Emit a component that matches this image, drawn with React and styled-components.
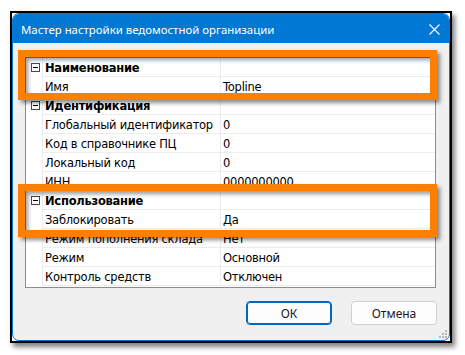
import React from "react";
import styled, { createGlobalStyle } from "styled-components";

const GlobalStyle = createGlobalStyle`
  * { box-sizing: border-box; }
  body {
    margin: 0;
    background: #ffffff;
  }
`;

const groups = [
  {
    title: "Наименование",
    rows: [["Имя", "Topline"]],
  },
  {
    title: "Идентификация",
    rows: [
      ["Глобальный идентификатор", "0"],
      ["Код в справочнике ПЦ", "0"],
      ["Локальный код", "0"],
      ["ИНН", "0000000000"],
    ],
  },
  {
    title: "Использование",
    rows: [
      ["Заблокировать", "Да"],
      ["Режим пополнения склада", "Нет"],
      ["Режим", "Основной"],
      ["Контроль средств", "Отключен"],
    ],
  },
];

const App = () => {
  return (
    <Stage>
      <GlobalStyle />
      <Frame>
        <Window>
          <TitleBar>
            <Title>Мастер настройки ведомостной организации</Title>
            <CloseButton>
              <svg width="11" height="11" viewBox="0 0 11 11">
                <path d="M0.5 0.5 L10.5 10.5 M10.5 0.5 L0.5 10.5" stroke="#fff" strokeWidth="1.1" fill="none" />
              </svg>
            </CloseButton>
          </TitleBar>
          <Body>
            <Grid>
              {groups.map((g) => (
                <React.Fragment key={g.title}>
                  <Row>
                    <Gutter>
                      <Toggle />
                    </Gutter>
                    <NameCell $bold>{g.title}</NameCell>
                    <ValueCell />
                  </Row>
                  {g.rows.map(([name, value]) => (
                    <Row key={name}>
                      <Gutter />
                      <NameCell>{name}</NameCell>
                      <ValueCell>{value}</ValueCell>
                    </Row>
                  ))}
                </React.Fragment>
              ))}
            </Grid>
            <Buttons>
              <Button $primary>ОК</Button>
              <Button>Отмена</Button>
            </Buttons>
          </Body>
          <Grip>
            <svg width="8" height="8" viewBox="0 0 8 8">
              <rect x="6" y="0" width="2" height="2" fill="#b8b8b8" />
              <rect x="3" y="3" width="2" height="2" fill="#b8b8b8" />
              <rect x="6" y="3" width="2" height="2" fill="#b8b8b8" />
              <rect x="0" y="6" width="2" height="2" fill="#b8b8b8" />
              <rect x="3" y="6" width="2" height="2" fill="#b8b8b8" />
              <rect x="6" y="6" width="2" height="2" fill="#b8b8b8" />
            </svg>
          </Grip>
        </Window>
      </Frame>
      <Highlight style={{ top: 50, height: 50 }} />
      <Highlight style={{ top: 184, height: 53 }} />
    </Stage>
  );
};

export default App;

const Stage = styled.div`
  position: relative;
  width: 465px;
  height: 355px;
  padding: 11px 0 0 10px;
`;

const Frame = styled.div`
  width: 442px;
  height: 332px;
  border: 2px solid #000;
  background: #fff;
  box-shadow: 3px 4px 5px rgba(0, 0, 0, 0.5);
`;

const Window = styled.div`
  position: relative;
  width: 438px;
  height: 328px;
  display: flex;
  flex-direction: column;
  border: 1px solid #0078d4;
  border-radius: 7px;
  overflow: hidden;
  background: #f0f0f0;
`;

const TitleBar = styled.div`
  height: 29px;
  flex-shrink: 0;
  display: flex;
  align-items: center;
  justify-content: space-between;
  background: #0078d4;
  padding: 0 8px 0 8px;
`;

const Title = styled.span`
  font-family: "Noto Sans", "Open Sans", sans-serif;
  font-size: 11.4px;
  color: #fff;
  margin-top: 1px;
`;

const CloseButton = styled.span`
  display: flex;
  margin-right: 1px;
  margin-top: 2px;
`;

const Body = styled.div`
  flex: 1;
  display: flex;
  flex-direction: column;
  padding: 14px 13px 15px 12px;
`;

const Grid = styled.div`
  height: 231px;
  border: 1px solid #8c8c8c;
  background: #fff;
  display: flex;
  flex-direction: column;
`;

const Row = styled.div`
  display: grid;
  grid-template-columns: 17px 178px 1fr;
  height: 19px;
  font-family: "DejaVu Sans", Verdana, sans-serif;
  font-size: 11.5px;
  letter-spacing: -0.25px;
  color: #000;
`;

const Gutter = styled.div`
  display: flex;
  align-items: center;
  padding-left: 5px;
  border-right: 1px solid #ececec;
`;

const Toggle = styled.span`
  position: relative;
  width: 9px;
  height: 9px;
  border: 1px solid #4a4a4a;
  background: #fff;

  &::after {
    content: "";
    position: absolute;
    left: 1px;
    top: 3px;
    width: 5px;
    height: 1px;
    background: #000;
  }
`;

const NameCell = styled.div`
  padding: 2px 0 0 2px;
  line-height: 16px;
  white-space: nowrap;
  overflow: hidden;
  font-weight: ${(p) => (p.$bold ? 700 : 400)};
  border-right: 1px solid #ececec;
  border-bottom: 1px solid #ececec;
`;

const ValueCell = styled.div`
  padding: 2px 0 0 2px;
  line-height: 16px;
  white-space: nowrap;
  border-bottom: 1px solid #ececec;
`;

const Buttons = styled.div`
  display: flex;
  justify-content: flex-end;
  gap: 19px;
  margin-top: 13px;
  margin-right: -1px;
`;

const Button = styled.button`
  width: 86px;
  height: 24px;
  padding: 0;
  border-radius: 4px;
  border: 1px solid ${(p) => (p.$primary ? "#0067c0" : "#d0d0d0")};
  box-shadow: ${(p) => (p.$primary ? "inset 0 0 0 1px #0067c0" : "none")};
  background: #fdfdfd;
  font-family: "Noto Sans", "Open Sans", sans-serif;
  font-size: 12px;
  color: #1a1a1a;
`;

const Grip = styled.span`
  position: absolute;
  right: 2px;
  bottom: 2px;
  display: flex;
`;

const Highlight = styled.div`
  position: absolute;
  left: 18px;
  width: 419px;
  border: 7px solid #ff8000;
  box-shadow: 3px 3px 4px rgba(0, 0, 0, 0.45), inset 3px 3px 4px rgba(0, 0, 0, 0.4);
  pointer-events: none;
`;
